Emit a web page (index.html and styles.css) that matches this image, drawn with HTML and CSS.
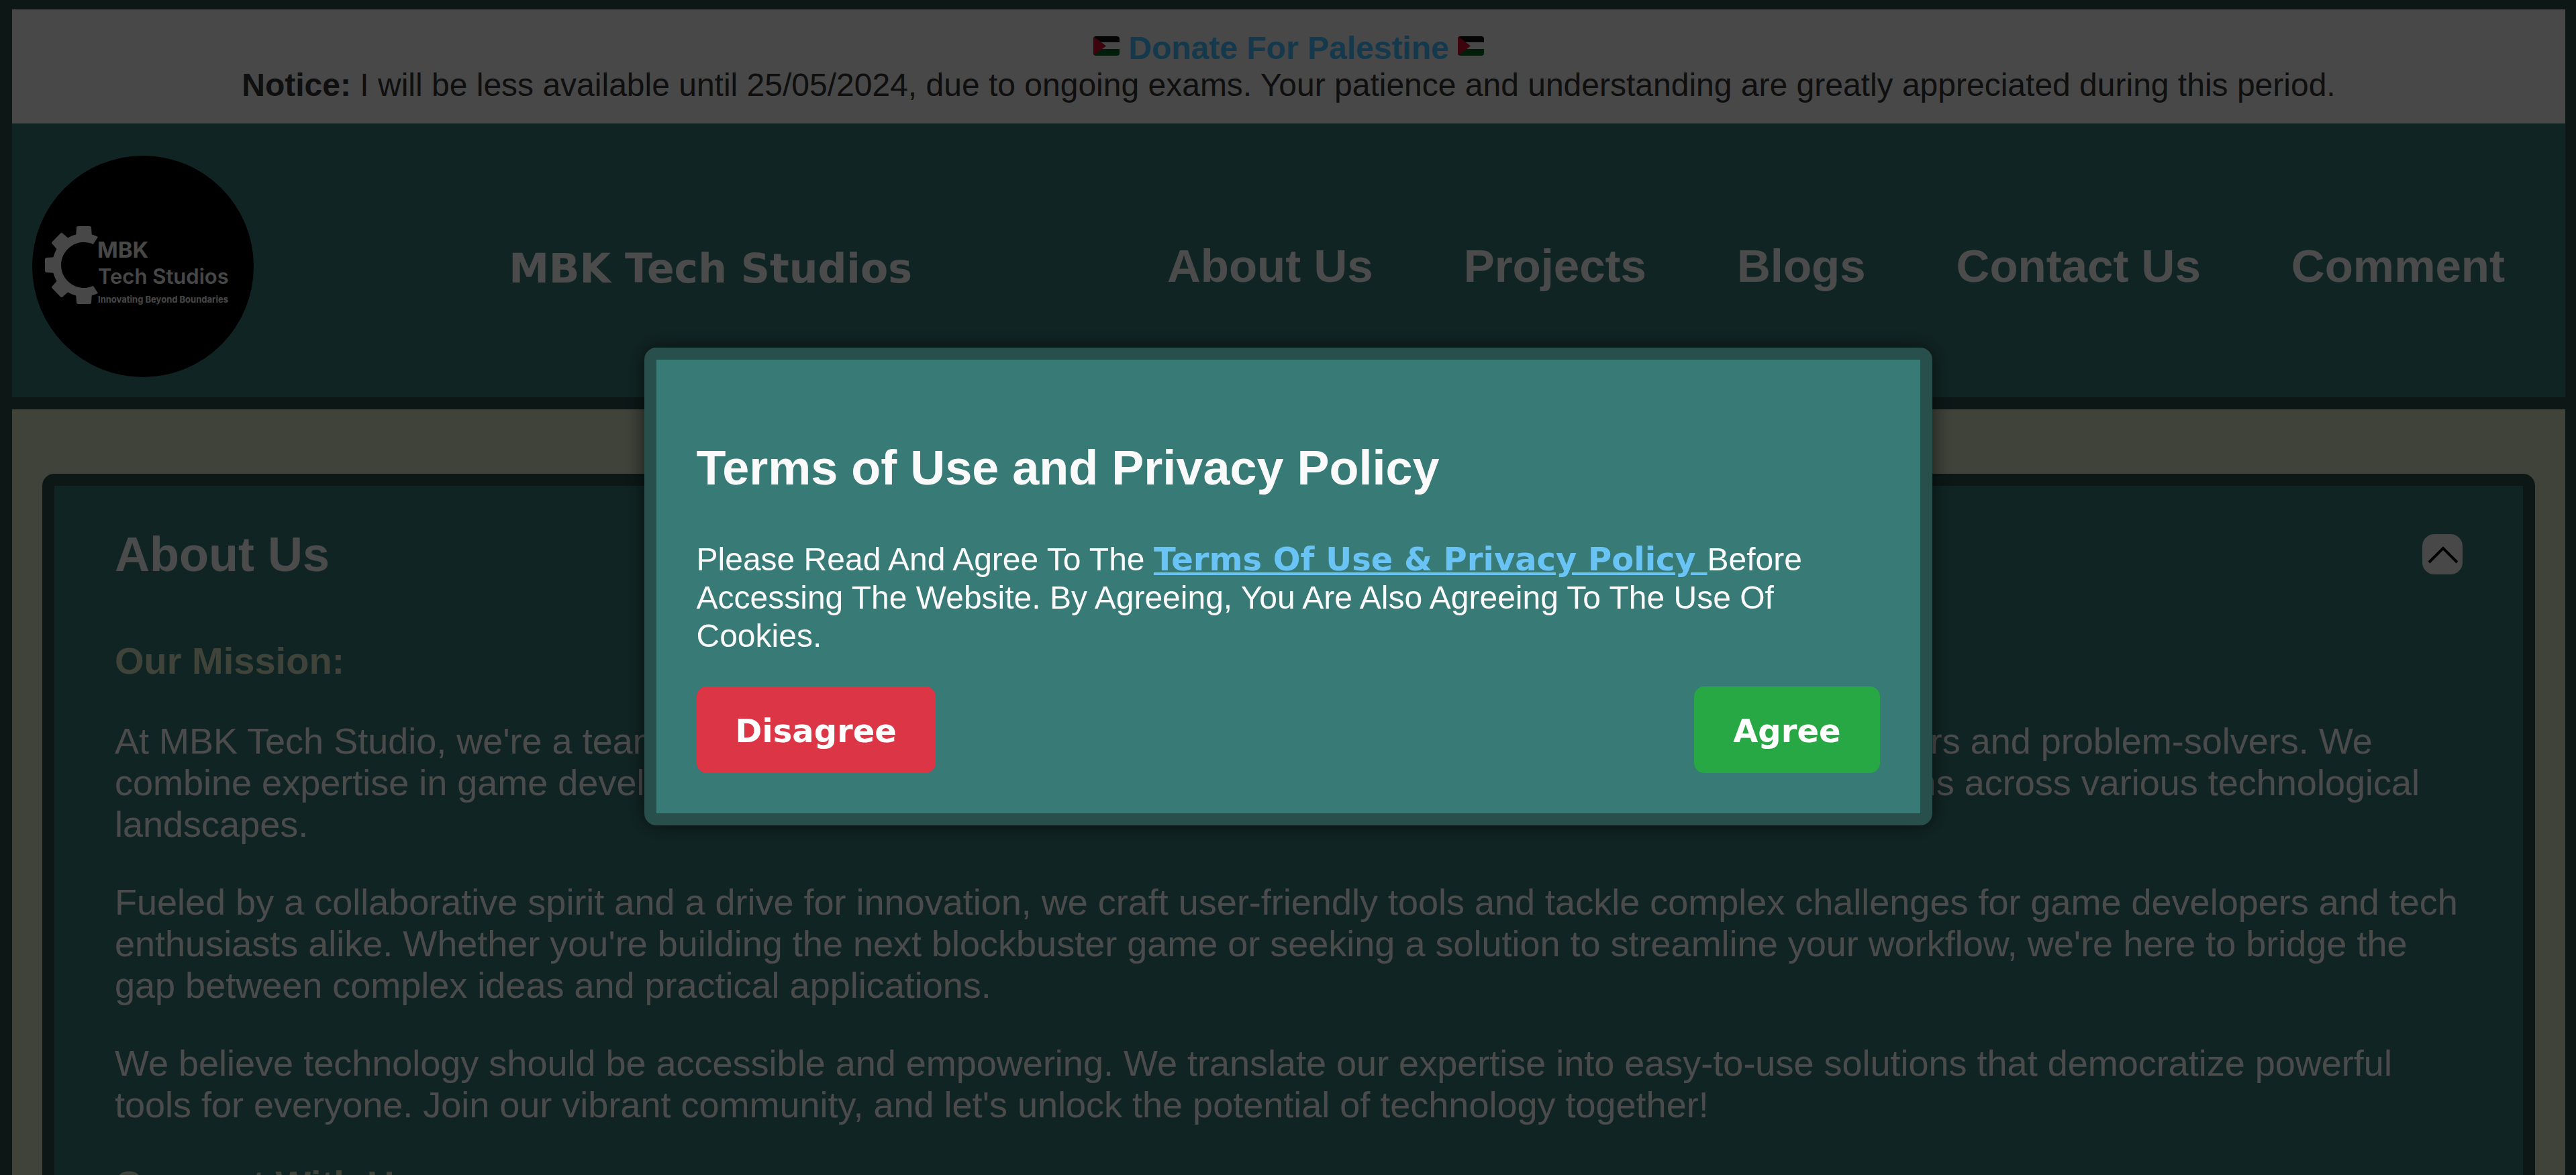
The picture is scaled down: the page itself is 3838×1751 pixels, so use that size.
FILE: index.html
```html
<!DOCTYPE html>
<html lang="en">
<head>
<meta charset="utf-8">
<title>MBK Tech Studios</title>
<link rel="stylesheet" href="styles.css">
</head>
<body>
<svg class="defs" width="0" height="0" aria-hidden="true">
  <symbol id="flag" viewBox="0 0 39 29">
    <clipPath id="flag-shape"><rect width="39" height="29" rx="4"/></clipPath>
    <g clip-path="url(#flag-shape)">
      <rect width="39" height="29" fill="#eee"/>
      <rect width="39" height="9" fill="#111"/>
      <rect y="19" width="39" height="10" fill="#076426"/>
      <path d="M0 0L19 14.500L0 29Z" fill="#d0102f"/>
    </g>
  </symbol>
</svg>

<div class="notice">
  <p><svg class="flag" role="img" aria-label="Flag of Palestine"><use href="#flag"/></svg> <a href="#donate" class="donate">Donate For Palestine</a> <svg class="flag" role="img" aria-label="Flag of Palestine"><use href="#flag"/></svg></p>
  <p><strong>Notice:</strong> I will be less available until 25/05/2024, due to ongoing exams. Your patience and understanding are greatly appreciated during this period.</p>
</div>

<header class="header">
  <svg class="logo" viewBox="0 0 330 330" role="img" aria-label="MBK Tech Studios logo">
    <circle cx="165" cy="165" r="165" fill="#000"/>
    <g fill="#eee">
      <path d="M98 121A47 47 0 1 0 98 205L91 194A34 34 0 1 1 91 132Z"/>
      <path id="tooth" d="M65 122L66 107Q66 105 69 105H85Q88 105 88 107L89 122Z"/>
      <use href="#tooth" transform="rotate(-45 77 163)"/>
      <use href="#tooth" transform="rotate(-90 77 163)"/>
      <use href="#tooth" transform="rotate(-135 77 163)"/>
      <use href="#tooth" transform="rotate(180 77 163)"/>
      <text class="logo-name" x="97" y="152">MBK</text>
      <text class="logo-sub" x="98" y="191">Tech Studios</text>
      <text class="logo-tag" x="98" y="219">Innovating Beyond Boundaries</text>
    </g>
  </svg>
  <div class="brand">MBK Tech Studios</div>
  <nav class="nav">
    <a href="#about">About Us</a>
    <a href="#projects">Projects</a>
    <a href="#blogs">Blogs</a>
    <a href="#contact">Contact Us</a>
    <a href="#comment">Comment</a>
  </nav>
</header>

<main class="main">
  <section class="card" id="about">
    <div class="card-head">
      <h1>About Us</h1>
      <button class="toggle" type="button" aria-label="Collapse section">
        <svg viewBox="0 0 60 60"><path d="M10 42L31 21L52 42" fill="none" stroke="#000" stroke-width="4"/></svg>
      </button>
    </div>
    <h2>Our Mission:</h2>
    <p>At MBK Tech Studio, we're a team of passionate individuals with a diverse set of skills – coders, designers, thinkers and problem-solvers. We combine expertise in game development, web and software engineering to create creative and innovative solutions across various technological landscapes.</p>
    <p>Fueled by a collaborative spirit and a drive for innovation, we craft user-friendly tools and tackle complex challenges for game developers and tech enthusiasts alike. Whether you're building the next blockbuster game or seeking a solution to streamline your workflow, we're here to bridge the gap between complex ideas and practical applications.</p>
    <p>We believe technology should be accessible and empowering. We translate our expertise into easy-to-use solutions that democratize powerful tools for everyone. Join our vibrant community, and let's unlock the potential of technology together!</p>
    <h2>Connect With Us:</h2>
  </section>
</main>

<div class="overlay">
  <div class="dialog" role="dialog" aria-modal="true" aria-labelledby="dialog-title">
    <h2 id="dialog-title">Terms of Use and Privacy Policy</h2>
    <p>Please Read And Agree To The <a href="#terms">Terms Of Use &amp; Privacy Policy </a>Before Accessing The Website. By Agreeing, You Are Also Agreeing To The Use Of Cookies.</p>
    <div class="actions">
      <button class="btn btn-no" type="button">Disagree</button>
      <button class="btn btn-yes" type="button">Agree</button>
    </div>
  </div>
</div>
</body>
</html>
```
FILE: styles.css
```css
* {
  box-sizing: border-box;
}

html {
  height: 100%;
}

body {
  margin: 0;
  height: 100%;
  overflow: hidden;
  border: solid #284f4b;
  border-width: 14px 16px 0 18px;
  background: #d2dfc1;
  color: #fafafa;
  font: 54px/62px "Liberation Sans", Arial, sans-serif;
}

h1, h2, p {
  margin: 0;
}

.defs {
  position: absolute;
}

.notice {
  padding: 30px;
  background: #f0f0f0;
  color: #333;
  font-size: 48px;
  line-height: 55px;
  text-align: center;
}

.flag {
  width: 39px;
  height: 29px;
  vertical-align: 5px;
}

.donate {
  color: #45bcff;
  font-weight: bold;
  text-decoration: none;
}

.header {
  display: flex;
  align-items: center;
  justify-content: space-between;
  padding: 48px 90px 30px 30px;
  border-bottom: 18px solid #284f4b;
  background: #377a76;
}

.logo {
  width: 330px;
  height: 330px;
}

.logo-name,
.logo-sub,
.logo-tag {
  font-family: Inter, sans-serif;
  font-weight: 600;
  font-size: 31px;
}

.logo-name {
  font-weight: 700;
  font-size: 33px;
}

.logo-tag {
  font-weight: 700;
  font-size: 13px;
}

.brand {
  padding-top: 6px;
  font: 900 60px/84px "Arial Black", "DejaVu Sans", sans-serif;
}

.nav {
  display: flex;
  gap: 135px;
}

.nav a {
  color: inherit;
  font-size: 69px;
  font-weight: bold;
  line-height: 80px;
  text-decoration: none;
}

.main {
  padding: 96px 45px;
}

.card {
  display: flex;
  flex-direction: column;
  gap: 54px;
  padding: 60px 90px;
  border: 18px solid #284f4b;
  border-radius: 18px;
  background: #377a76;
}

.card-head {
  display: flex;
  align-items: center;
  justify-content: space-between;
  height: 84px;
  margin-bottom: 29px;
}

.card h1 {
  font-size: 72px;
}

.card h2 {
  color: #d2dfc1;
  font-size: 56px;
  line-height: 68px;
}

.toggle {
  width: 60px;
  height: 60px;
  padding: 0;
  border: 0;
  border-radius: 18px;
  background: #f0f0f0;
}

.toggle svg {
  display: block;
}

.overlay {
  position: fixed;
  inset: 0;
  display: flex;
  align-items: center;
  justify-content: center;
  padding-bottom: 3px;
  background: rgba(0, 0, 0, 0.7);
}

.dialog {
  width: 50%;
  padding: 120px 60px 60px;
  border: 18px solid #284f4b;
  border-radius: 18px;
  background: #377a76;
  box-shadow: 0 0 30px rgba(0, 0, 0, 0.6);
  font-size: 48px;
  line-height: 57px;
}

.dialog h2 {
  margin-bottom: 67px;
  font-size: 72px;
  line-height: 82px;
}

.dialog p {
  margin-bottom: 47px;
}

.dialog a {
  color: #69c3f5;
  font-family: "Arial Black", "DejaVu Sans", sans-serif;
  font-weight: 900;
}

.actions {
  display: flex;
  justify-content: space-between;
}

.btn {
  padding: 32px 58px 28px;
  border: 0;
  border-radius: 15px;
  color: #fff;
  font: 900 48px/69px "Arial Black", "DejaVu Sans", sans-serif;
}

.btn-no {
  background: #dc3545;
}

.btn-yes {
  background: #28a745;
}
```
